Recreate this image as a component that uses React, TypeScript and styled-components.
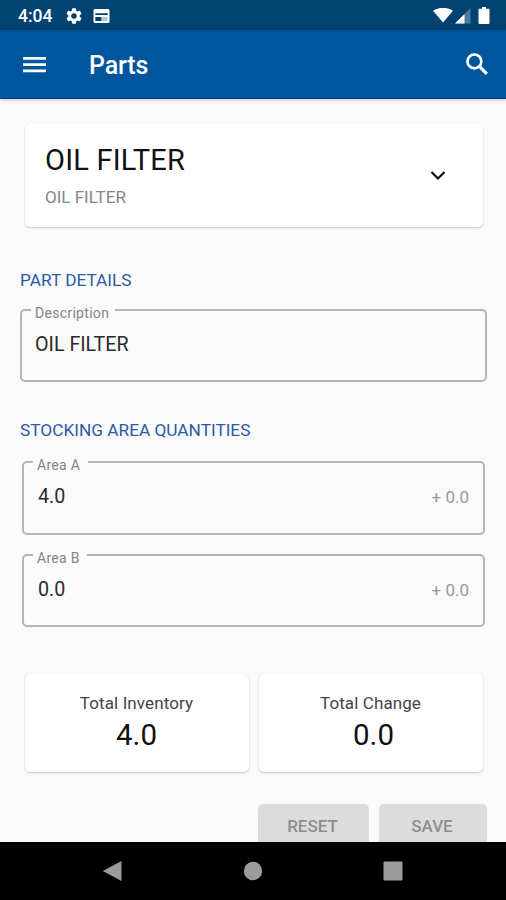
import React from "react";
import styled, { createGlobalStyle } from "styled-components";

const GlobalStyle = createGlobalStyle`
  *, *::before, *::after { box-sizing: border-box; }
  body { margin: 0; background: #fafafa; font-family: Roboto, "Liberation Sans", sans-serif; }
`;

const Screen = styled.div`
  display: flex;
  flex-direction: column;
  width: 506px;
  height: 900px;
  overflow: hidden;
  background: #fafafa;
  color: #111;
`;

const StatusBar = styled.header`
  display: flex;
  align-items: center;
  flex: 0 0 30px;
  padding: 1px 15px 0 18px;
  background: #004270;
  color: #fff;
`;

const Clock = styled.span`
  width: 48px;
  padding-top: 1px;
  font-size: 17.5px;
  font-weight: 500;
  line-height: 28px;
`;

const StatusIcons = styled.div<{ $gap: number; $end?: boolean }>`
  display: flex;
  align-items: center;
  gap: ${(p) => p.$gap}px;
  margin-left: ${(p) => (p.$end ? "auto" : "0")};
`;

const AppBar = styled.div`
  display: flex;
  align-items: center;
  flex: 0 0 69px;
  padding: 1px 17px 0 23px;
  background: #00569c;
  border-bottom: 1px solid #063f91;
  box-shadow: 0 1px 4px rgba(0, 0, 0, 0.22);
  z-index: 1;
`;

const BarTitle = styled.h1`
  flex: 1;
  margin: 0 0 0 42px;
  padding-top: 2px;
  color: #fff;
  font-size: 25px;
  font-weight: 500;
  line-height: 30px;
  letter-spacing: -0.15px;
`;

const IconButton = styled.button<{ $drop?: number }>`
  display: flex;
  padding: 0;
  border: 0;
  margin: ${(p) => p.$drop ?? 0}px 0 0;
  background: none;
  color: inherit;
`;

const Content = styled.main`
  flex: 1;
  min-height: 0;
  overflow: hidden;
  padding: 25px 19px 0 20px;
`;

const Card = styled.section`
  background: #fff;
  border-radius: 5px;
  box-shadow: 0 1px 2px rgba(0, 0, 0, 0.2), 0 0 1px rgba(0, 0, 0, 0.1);
`;

const PartCard = styled(Card)`
  display: flex;
  align-items: center;
  justify-content: space-between;
  height: 103px;
  margin: 0 4px 0 5px;
  padding: 0 37px 1px 20px;
`;

const PartName = styled.div`
  font-size: 29px;
  line-height: 34px;
  letter-spacing: 0.2px;
`;

const PartSubtitle = styled.div`
  margin-top: 10px;
  color: #858585;
  font-size: 17px;
  line-height: 20px;
`;

const SectionTitle = styled.h2<{ $top: number }>`
  margin: ${(p) => p.$top}px 0 0;
  color: #2a5ba4;
  font-size: 17.25px;
  font-weight: 400;
  line-height: 22px;
`;

const Field = styled.fieldset<{ $top: number; $height: number; $inset?: boolean }>`
  height: ${(p) => p.$height}px;
  min-width: 0;
  margin: ${(p) => p.$top}px ${(p) => (p.$inset ? "2px 0 2px" : "0 0 0")};
  padding: 0 14px 0 9px;
  border: 2px solid #b4b4b4;
  border-radius: 5px;
`;

const FieldLabel = styled.legend<{ $width: number }>`
  width: ${(p) => p.$width}px;
  height: 22px;
  padding: 6px 0 0 4px;
  color: #858585;
  font-size: 14px;
  line-height: 16px;
  letter-spacing: 0.3px;
  white-space: nowrap;
`;

const FieldRow = styled.div<{ $indent: number }>`
  display: flex;
  align-items: center;
  justify-content: space-between;
  padding: 11px 0 0 ${(p) => p.$indent}px;
`;

const FieldValue = styled.span<{ $size: number }>`
  padding-top: 1px;
  color: #2b2b2b;
  font-size: ${(p) => p.$size}px;
  line-height: 24px;
`;

const FieldDelta = styled.span`
  padding-top: 1px;
  color: #999;
  font-size: 17px;
  line-height: 24px;
`;

const Totals = styled.div`
  display: grid;
  grid-template-columns: 224px 224px;
  gap: 10px;
  margin: 47px 4px 0 5px;
`;

const TotalCard = styled(Card)`
  display: flex;
  flex-direction: column;
  align-items: center;
  height: 98px;
  padding: 19px 1px 0 0;
`;

const TotalLabel = styled.div`
  color: #444;
  font-size: 17px;
  line-height: 20px;
  letter-spacing: 0.1px;
`;

const TotalValue = styled.div<{ $indent: number }>`
  margin-top: 4px;
  padding-left: ${(p) => p.$indent}px;
  font-size: 29.5px;
  line-height: 36px;
`;

const Actions = styled.div`
  display: flex;
  justify-content: flex-end;
  gap: 10px;
  margin-top: 32px;
`;

const ActionButton = styled.button<{ $width: number }>`
  width: ${(p) => p.$width}px;
  height: 46px;
  padding: 0 2px 2px 0;
  border: 0;
  border-radius: 5px;
  background: #dcdcdc;
  color: #8e8e8e;
  font-family: inherit;
  font-size: 17px;
  font-weight: 500;
`;

const NavBar = styled.nav`
  display: flex;
  align-items: center;
  justify-content: space-between;
  flex: 0 0 58px;
  padding: 0 103px 0 102px;
  background: #000;
  color: #9c9c9c;
`;

const areas = [
  { label: "Area A", value: "4.0", delta: "+ 0.0", width: 55, top: 10, height: 84 },
  { label: "Area B", value: "0.0", delta: "+ 0.0", width: 54, top: 9, height: 83 },
];

const totals = [
  { label: "Total Inventory", value: "4.0", indent: 0 },
  { label: "Total Change", value: "0.0", indent: 6 },
];

export default function App() {
  return (
    <Screen>
      <GlobalStyle />
      <StatusBar>
        <Clock>4:04</Clock>
        <StatusIcons $gap={11}>
          <svg width="16" height="16" viewBox="2 2 20 20" fill="currentColor">
            <path d="M19.14 12.94c.04-.3.06-.61.06-.94 0-.32-.02-.64-.07-.94l2.03-1.58a.49.49 0 0 0 .12-.61l-1.92-3.32a.488.488 0 0 0-.59-.22l-2.39.96c-.5-.38-1.03-.7-1.62-.94l-.36-2.54a.484.484 0 0 0-.48-.41h-3.84c-.24 0-.43.17-.47.41l-.36 2.54c-.59.24-1.13.57-1.62.94l-2.39-.96c-.22-.08-.47 0-.59.22L2.74 8.87c-.12.21-.08.47.12.61l2.03 1.58c-.05.3-.09.63-.09.94s.02.64.07.94l-2.03 1.58a.49.49 0 0 0-.12.61l1.92 3.32c.12.22.37.29.59.22l2.39-.96c.5.38 1.03.7 1.62.94l.36 2.54c.05.24.24.41.48.41h3.84c.24 0 .44-.17.47-.41l.36-2.54c.59-.24 1.13-.56 1.62-.94l2.39.96c.22.08.47 0 .59-.22l1.92-3.32c.12-.22.07-.47-.12-.61l-2.01-1.58zM12 15.4A3.4 3.4 0 1 1 12 8.6a3.4 3.4 0 0 1 0 6.8z" />
          </svg>
          <svg width="17" height="16" viewBox="0 0 17 16">
            <path fill="#fff" fillRule="evenodd" d="M2 1h13a1.500 1.500 0 0 1 1.500 1.500v11A1.500 1.500 0 0 1 15 15H2a1.500 1.500 0 0 1-1.500-1.500v-11A1.500 1.500 0 0 1 2 1zm.3 4.300v1.800h12.400V5.300zm0 3.800v4h6.200v-4z" />
            <path fill="#b7c5d8" d="M9 9h5.500v4.200H9z" />
          </svg>
        </StatusIcons>
        <StatusIcons $gap={2} $end>
          <svg width="20" height="16" viewBox="0 0 20 16">
            <path fill="#fff" d="M0 2.800C5.500-1.200 14.500-1.200 20 2.800L10 14.500z" />
          </svg>
          <svg width="16" height="16" viewBox="0 0 16 16">
            <path fill="#52799a" d="M15.500 0v15.500H0z" />
            <path fill="#fff" d="M9.500 6v9.500H0z" />
          </svg>
          <svg width="18" height="18" viewBox="0 0 18 18">
            <path fill="#fff" d="M9 0h4v1.700h2.500q1 0 1 1v13.300q0 1-1 1h-9q-1 0-1-1V2.700q0-1 1-1H9z" />
          </svg>
        </StatusIcons>
      </StatusBar>

      <AppBar>
        <IconButton aria-label="Menu">
          <svg width="24" height="18" viewBox="0 0 24 18">
            <path fill="#fff" d="M0 1h23v2.700H0zm0 6.300h23V10H0zm0 6.300h23v2.700H0z" />
          </svg>
        </IconButton>
        <BarTitle>Parts</BarTitle>
        <IconButton aria-label="Search" $drop={-1}>
          <svg width="24" height="24" viewBox="0 0 24 24" fill="none" stroke="#fff">
            <circle cx="9.400" cy="9.400" r="6.900" strokeWidth="2.700" />
            <path d="M14.400 14.400l7.400 7.400" strokeWidth="3.300" />
          </svg>
        </IconButton>
      </AppBar>

      <Content>
        <PartCard>
          <div>
            <PartName>OIL FILTER</PartName>
            <PartSubtitle>OIL FILTER</PartSubtitle>
          </div>
          <IconButton aria-label="Expand" $drop={2}>
            <svg width="16" height="12" viewBox="0 0 16 12" fill="none" stroke="#111" strokeWidth="2.200">
              <path d="M1.500 2l6.500 6.500L14.500 2" />
            </svg>
          </IconButton>
        </PartCard>

        <SectionTitle $top={42}>PART DETAILS</SectionTitle>
        <Field $top={8} $height={83}>
          <FieldLabel $width={84}>Description</FieldLabel>
          <FieldRow $indent={4}>
            <FieldValue $size={19.7}>OIL FILTER</FieldValue>
          </FieldRow>
        </Field>

        <SectionTitle $top={37}>STOCKING AREA QUANTITIES</SectionTitle>
        {areas.map((area) => (
          <Field key={area.label} $top={area.top} $height={area.height} $inset>
            <FieldLabel $width={area.width}>{area.label}</FieldLabel>
            <FieldRow $indent={5}>
              <FieldValue $size={19.7}>{area.value}</FieldValue>
              <FieldDelta>{area.delta}</FieldDelta>
            </FieldRow>
          </Field>
        ))}

        <Totals>
          {totals.map((total) => (
            <TotalCard key={total.label}>
              <TotalLabel>{total.label}</TotalLabel>
              <TotalValue $indent={total.indent}>{total.value}</TotalValue>
            </TotalCard>
          ))}
        </Totals>

        <Actions>
          <ActionButton $width={111}>RESET</ActionButton>
          <ActionButton $width={108}>SAVE</ActionButton>
        </Actions>
      </Content>

      <NavBar>
        <IconButton aria-label="Back">
          <svg width="20" height="22" viewBox="0 0 20 22">
            <path fill="currentColor" d="M19.500 1v20L.8 11z" />
          </svg>
        </IconButton>
        <IconButton aria-label="Home">
          <svg width="20" height="20" viewBox="0 0 20 20">
            <circle cx="10" cy="10" r="9.200" fill="currentColor" />
          </svg>
        </IconButton>
        <IconButton aria-label="Recents">
          <svg width="20" height="20" viewBox="0 0 20 20">
            <rect x=".5" y=".5" width="19" height="19" rx="1" fill="currentColor" />
          </svg>
        </IconButton>
      </NavBar>
    </Screen>
  );
}
